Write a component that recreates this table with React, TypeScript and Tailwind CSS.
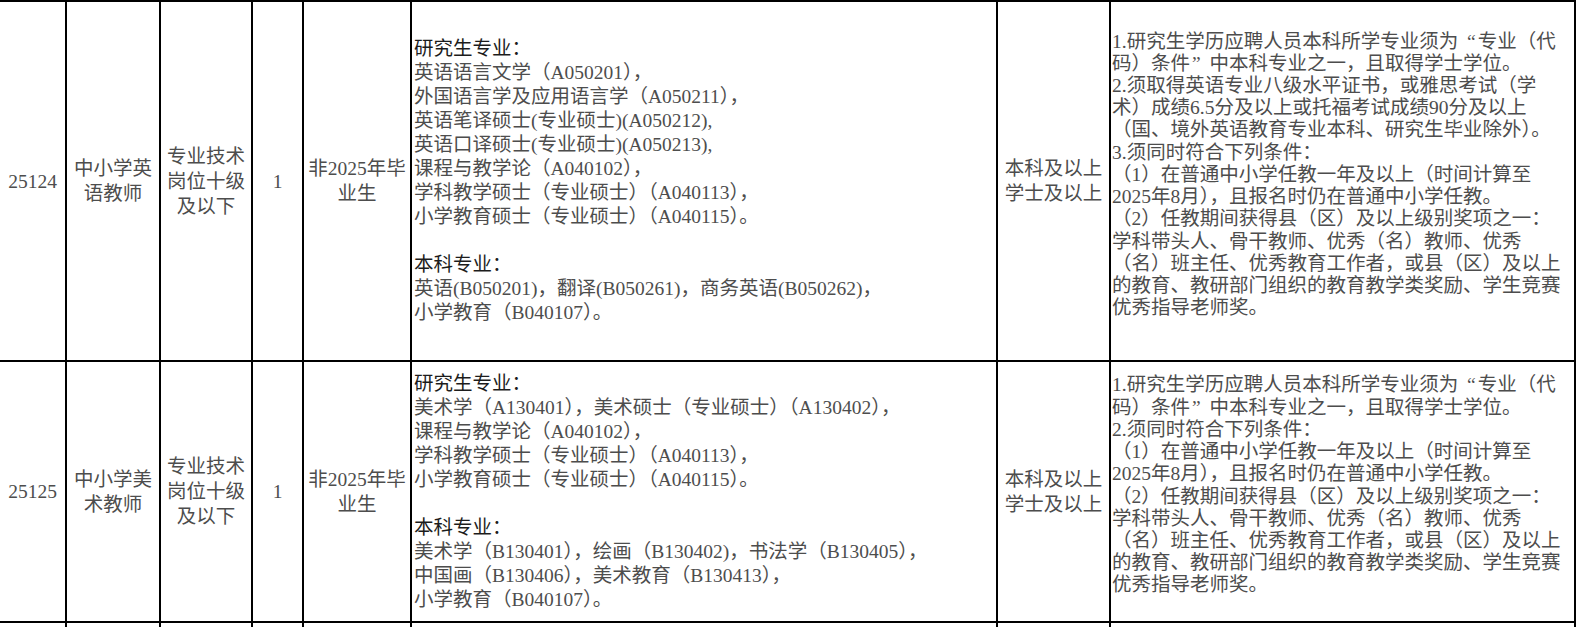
const font = { fontFamily: '"Liberation Serif", "Noto Sans CJK SC", serif' };

type Post = {
  code: string;
  title: string[];
  level: string[];
  count: string;
  grad: string[];
  majors: string[];
  degree: string[];
  notes: string[];
};

const posts: Post[] = [
  {
    code: "25124",
    title: ["中小学英", "语教师"],
    level: ["专业技术", "岗位十级", "及以下"],
    count: "1",
    grad: ["非2025年毕", "业生"],
    majors: [
      "研究生专业：",
      "英语语言文学（A050201），",
      "外国语言学及应用语言学（A050211），",
      "英语笔译硕士(专业硕士)(A050212),",
      "英语口译硕士(专业硕士)(A050213),",
      "课程与教学论（A040102），",
      "学科教学硕士（专业硕士）（A040113），",
      "小学教育硕士（专业硕士）（A040115）。",
      "",
      "本科专业：",
      "英语(B050201)，翻译(B050261)，商务英语(B050262)，",
      "小学教育（B040107）。",
    ],
    degree: ["本科及以上", "学士及以上"],
    notes: [
      "1.研究生学历应聘人员本科所学专业须为“专业（代",
      "码）条件”中本科专业之一，且取得学士学位。",
      "2.须取得英语专业八级水平证书，或雅思考试（学",
      "术）成绩6.5分及以上或托福考试成绩90分及以上",
      "（国、境外英语教育专业本科、研究生毕业除外）。",
      "3.须同时符合下列条件：",
      "（1）在普通中小学任教一年及以上（时间计算至",
      "2025年8月），且报名时仍在普通中小学任教。",
      "（2）任教期间获得县（区）及以上级别奖项之一：",
      "学科带头人、骨干教师、优秀（名）教师、优秀",
      "（名）班主任、优秀教育工作者，或县（区）及以上",
      "的教育、教研部门组织的教育教学类奖励、学生竞赛",
      "优秀指导老师奖。",
    ],
  },
  {
    code: "25125",
    title: ["中小学美", "术教师"],
    level: ["专业技术", "岗位十级", "及以下"],
    count: "1",
    grad: ["非2025年毕", "业生"],
    majors: [
      "研究生专业：",
      "美术学（A130401），美术硕士（专业硕士）（A130402），",
      "课程与教学论（A040102），",
      "学科教学硕士（专业硕士）（A040113），",
      "小学教育硕士（专业硕士）（A040115）。",
      "",
      "本科专业：",
      "美术学（B130401），绘画（B130402)，书法学（B130405），",
      "中国画（B130406），美术教育（B130413），",
      "小学教育（B040107）。",
    ],
    degree: ["本科及以上", "学士及以上"],
    notes: [
      "1.研究生学历应聘人员本科所学专业须为“专业（代",
      "码）条件”中本科专业之一，且取得学士学位。",
      "2.须同时符合下列条件：",
      "（1）在普通中小学任教一年及以上（时间计算至",
      "2025年8月），且报名时仍在普通中小学任教。",
      "（2）任教期间获得县（区）及以上级别奖项之一：",
      "学科带头人、骨干教师、优秀（名）教师、优秀",
      "（名）班主任、优秀教育工作者，或县（区）及以上",
      "的教育、教研部门组织的教育教学类奖励、学生竞赛",
      "优秀指导老师奖。",
    ],
  },
];

// SimSun-style full-width curly quotes
function withQuotes(text: string) {
  return text.split(/([“”])/).map((part, i) =>
    part === "“" ? (
      <span key={i} className="inline-block w-[1em] pr-[2px] text-right">
        “
      </span>
    ) : part === "”" ? (
      <span key={i} className="inline-block w-[1em] pl-[2px] text-left">
        ”
      </span>
    ) : (
      part
    )
  );
}

function Center({ lines }: { lines: string[] }) {
  return (
    <div className="flex items-center justify-center overflow-hidden bg-white text-center leading-[25px]">
      <div>
        {lines.map((l, i) => (
          <div key={i} className="whitespace-nowrap">
            {l}
          </div>
        ))}
      </div>
    </div>
  );
}

function Lines({ lines, className }: { lines: string[]; className: string }) {
  return (
    <div className={`flex items-center overflow-hidden bg-white ${className}`}>
      <div>
        {lines.map((l, i) => (
          <div
            key={i}
            className={
              l.endsWith("专业：")
                ? "whitespace-nowrap text-[#1c1c1c]"
                : "whitespace-nowrap"
            }
          >
            {l ? withQuotes(l) : "\u00a0"}
          </div>
        ))}
      </div>
    </div>
  );
}

export default function App() {
  return (
    <div className="h-[627px] w-[1577px] overflow-hidden bg-white">
      <div
        style={font}
        className="grid w-[1576px] grid-cols-[65px_92px_90px_49px_106px_584px_111px_463px] grid-rows-[358px_259px_20px] gap-[2px] bg-black pt-[2px] pr-[2px] text-[19.5px] text-[#4d4d4d]"
      >
        {posts.map((p) => (
          <div key={p.code} className="contents">
            <Center lines={[p.code]} />
            <Center lines={p.title} />
            <Center lines={p.level} />
            <Center lines={[p.count]} />
            <Center lines={p.grad} />
            <Lines lines={p.majors} className="pl-[2px] leading-[24px]" />
            <Center lines={p.degree} />
            <Lines lines={p.notes} className="pb-[12px] pl-[1px] leading-[22.2px]" />
          </div>
        ))}
        {Array.from({ length: 8 }).map((_, i) => (
          <div key={i} className="bg-white" />
        ))}
      </div>
    </div>
  );
}
